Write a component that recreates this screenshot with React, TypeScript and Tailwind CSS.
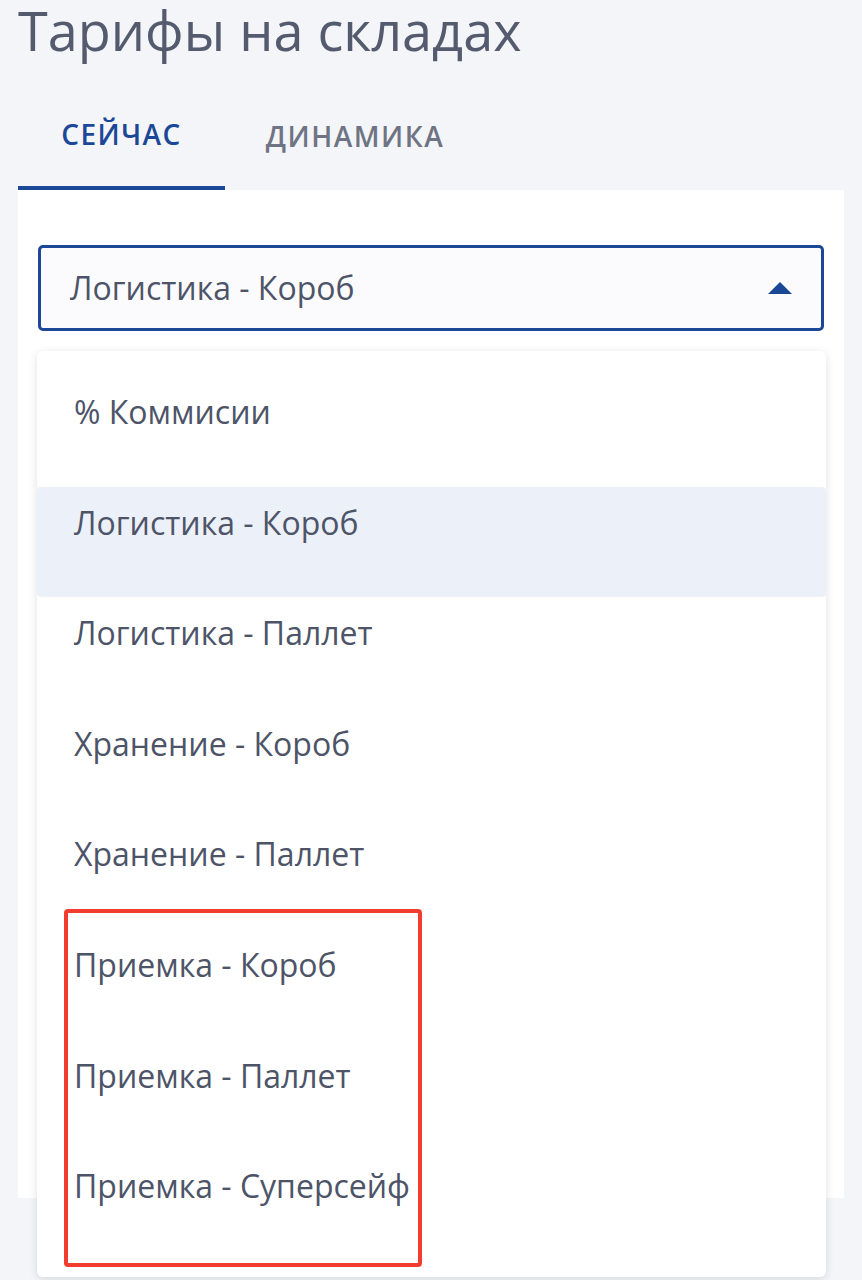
import React from "react";

const items = [
  "% Коммисии",
  "Логистика - Короб",
  "Логистика - Паллет",
  "Хранение - Короб",
  "Хранение - Паллет",
  "Приемка - Короб",
  "Приемка - Паллет",
  "Приемка - Суперсейф",
];

export default function App() {
  return (
    <div
      className="relative h-[1280px] w-[862px] overflow-hidden bg-[#f4f5f8]"
      style={{ fontFamily: '"Open Sans", "Noto Sans", sans-serif' }}
    >
      <h1 className="h-[92px] pl-[18px] pt-0 text-[54px] leading-[60px] text-[#545b6f]">
        Тарифы на складах
      </h1>
      <div className="flex pl-[18px]">
        <div className="flex h-[98px] w-[207px] items-center justify-center border-b-[4px] border-[#1b4797] pb-[10px] text-[28px] font-semibold tracking-[1.5px] text-[#1b4797]">
          СЕЙЧАС
        </div>
        <div className="flex h-[98px] w-[260px] items-center justify-center pb-[10px] text-[28px] font-semibold tracking-[1.5px] text-[#6f7484]">
          ДИНАМИКА
        </div>
      </div>
      <div className="mx-[18px] h-[1008px] bg-white px-[20px] pt-[55px]">
        <div className="flex h-[86px] items-center justify-between rounded-[5px] border-[3px] border-[#1b4797] bg-[#fbfbfd] pl-[29px] pr-[29px]">
          <span className="text-[32px] leading-[40px] text-[#4d5468]">Логистика - Короб</span>
          <svg width="24" height="12" viewBox="0 0 24 12">
            <polygon points="12,0 24,12 0,12" fill="#1b4797" />
          </svg>
        </div>
      </div>
      <div className="absolute left-[37px] top-[351px] w-[789px] rounded-[6px] bg-white pb-[16px] pt-[25px] shadow-[0_2px_10px_rgba(0,0,0,0.12)]">
        {items.map((t, i) => (
          <div
            key={t}
            className={
              "h-[110.6px] rounded-[4px] pl-[37px] pt-[16px] text-[32px] leading-[40px] text-[#4d5468] " +
              (i === 1 ? "bg-[#ecf0f8]" : "")
            }
          >
            {t}
          </div>
        ))}
      </div>
      <div className="absolute left-[64px] top-[909px] h-[358px] w-[358px] rounded-[4px] border-[4px] border-[#f23c2f]" />
    </div>
  );
}
